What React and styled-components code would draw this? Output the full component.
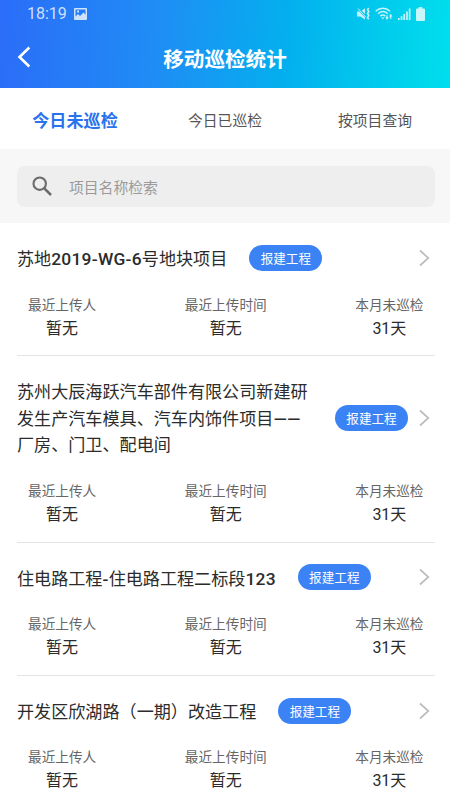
import React from 'react'
import styled, { createGlobalStyle } from 'styled-components';

const GlobalStyle = createGlobalStyle`
*{
    box-sizing:border-box;
}
body{
    margin:0;
    background:#fff;
    font-family:Roboto, 'Noto Sans CJK SC', sans-serif;
    color:#2b2b2b;
}
`;

const Page = styled.div`
    width:450px;
    height:800px;
    overflow:hidden;
    background:#fff;
`;

const Header = styled.header`
    height:88px;
    color:#fff;
    background:linear-gradient(93deg, #2b6df8 0%, #1f8df5 35%, #03b0ee 64%, #00dfec 100%);
`;

const StatusBar = styled.div`
    display:flex;
    align-items:center;
    justify-content:space-between;
    height:27px;
    padding:0 25px 0 27px;
    color:rgba(255,255,255,0.78);
`;

const StatusGroup = styled.div`
    display:flex;
    align-items:center;
    gap:${props => props.$gap};
`;

const Time = styled.span`
    font-size:16px;
    line-height:27px;
`;

const NavBar = styled.div`
    display:grid;
    grid-template-columns:60px 1fr 60px;
    align-items:center;
    height:61px;
`;

const BackButton = styled.button`
    display:flex;
    padding:0 0 1px 17px;
    border:none;
    background:none;
    color:#fff;
`;

const Title = styled.h1`
    margin:0;
    padding-top:4px;
    font-size:20.6px;
    font-weight:700;
    line-height:30px;
    text-align:center;
`;

const Tabs = styled.nav`
    display:flex;
    height:61px;
`;

const Tab = styled.button`
    flex:1;
    padding:2px 0 0;
    border:none;
    background:none;
    font-family:inherit;
    font-size:${props => (props.$active ? '17.1px' : '14.8px')};
    font-weight:${props => (props.$active ? 700 : 400)};
    color:${props => (props.$active ? '#2a73ee' : '#555')};
`;

const SearchArea = styled.div`
    height:74px;
    padding:16.5px 15px 0 17px;
    background:#f7f7f7;
`;

const SearchBox = styled.div`
    display:flex;
    align-items:center;
    gap:17px;
    height:41px;
    padding-left:15px;
    border-radius:8px;
    background:#eee;
    color:#9a9a9a;
    font-size:14.8px;
`;

const List = styled.div`
    padding:0 15px 0 17px;
`;

const Item = styled.section`
    padding:23px 0 15.8px;
    border-bottom:1px solid #e4e4e4;
`;

const ItemHead = styled.div`
    display:flex;
    align-items:center;
`;

const Name = styled.h2`
    margin:0;
    font-size:17.1px;
    font-weight:400;
    line-height:26.5px;
`;

const Latin = styled.span`
    font-size:17.4px;
    font-weight:500;
    line-height:1;
    letter-spacing:0.25px;
`;

const Badge = styled.span`
    flex:none;
    width:73px;
    height:26px;
    margin:-3px 11px 0 22px;
    border-radius:13px;
    background:#3b82f5;
    color:#fff;
    font-size:12.6px;
    line-height:27px;
    text-align:center;
`;

const Arrow = styled.svg`
    flex:none;
    margin:-3px 5px 0 auto;
    color:#bdbdbd;
`;

const Stats = styled.div`
    display:flex;
    justify-content:space-between;
    margin-top:22px;
    padding:0 11.5px 0 11px;
`;

const Stat = styled.div`
    text-align:center;
`;

const Label = styled.div`
    font-size:13.65px;
    line-height:21px;
    color:#666;
`;

const Value = styled.div`
    padding-top:2px;
    font-size:16px;
    line-height:22px;
`;

const items = [
    { name: '苏地2019-WG-6号地块项目' },
    { name: '苏州大辰海跃汽车部件有限公司新建研发生产汽车模具、汽车内饰件项目——厂房、门卫、配电间' },
    { name: '住电路工程-住电路工程二标段123' },
    { name: '开发区欣湖路（一期）改造工程' },
];

function StatusIcons() {
    return (
        <StatusGroup $gap='5px'>
            {/** Muted */}
            <svg width='13' height='14' viewBox='0 0 13 14' fill='currentColor'>
                <path d='M4.8 3.7L8 1.2v5.9zM0 4.6h2.3L8 10.5v2L3.4 9.4H0z' />
                <path d='M1 1.6l7.6 8.4' fill='none' stroke='currentColor' strokeWidth='1' />
                <path d='M11.7 1l-1.2 1.7 1.3 1.8-1.3 2 1.3 2-1.3 2 1.2 1.9' fill='none' stroke='currentColor' strokeWidth='1.6' />
            </svg>
            {/** Wifi */}
            <svg width='18' height='14' viewBox='0 0 18 14' fill='none' stroke='currentColor' strokeWidth='1.5'>
                <path d='M.7 4.2C4.8.3 11 .3 15 4.2M3 6.7c3-2.6 6.8-2.6 9.8 0M5.3 9.1c1.6-1.3 3.6-1.3 5 0' />
                <path d='M6.3 10.6h3L7.8 12.5z' fill='currentColor' stroke='none' />
                <path d='M10.2 10.3h3.6L12 13zM13.9 9.4h3.6l-1.8-2.700z' fill='currentColor' stroke='none' />
                <path d='M12 8.3v3M15.700 9v3' strokeWidth='1.2' />
            </svg>
            {/** Signal */}
            <svg width='13' height='14' viewBox='0 0 13 14' fill='currentColor'>
                <path d='M0 11h1.7v2H0zM2.7 9.2h1.7V13H2.7zM5.4 7h1.7v6H5.4zM8.1 4.6h1.7V13H8.1zM10.8 1.5h1.7V13h-1.7z' />
            </svg>
            {/** Battery */}
            <svg width='9' height='14' viewBox='0 0 9 14' fill='currentColor'>
                <path d='M2.7 0h3.6v1.5H8q1 0 1 1V13q0 1-1 1H1q-1 0-1-1V2.5q0-1 1-1h1.7z' />
            </svg>
        </StatusGroup>
    )
}

function ProjectItem({ name }) {
    // letters and digits are heavier than the Chinese text around them
    const parts = name.split(/([A-Za-z0-9-]+|—+)/);

    return (
        <Item>
            <ItemHead>
                <Name>
                    {parts.map((part, i) => (i % 2 ? <Latin key={i}>{part}</Latin> : part))}
                </Name>
                <Badge>报建工程</Badge>
                <Arrow width='11' height='18' viewBox='0 0 11 18' fill='none' stroke='currentColor' strokeWidth='1.7'>
                    <path d='M1 1.5L9.3 9 1 16.5' />
                </Arrow>
            </ItemHead>
            <Stats>
                <Stat>
                    <Label>最近上传人</Label>
                    <Value>暂无</Value>
                </Stat>
                <Stat>
                    <Label>最近上传时间</Label>
                    <Value>暂无</Value>
                </Stat>
                <Stat>
                    <Label>本月未巡检</Label>
                    <Value>31天</Value>
                </Stat>
            </Stats>
        </Item>
    )
}

function App() {
    return (
        <Page>
            <GlobalStyle />
            <Header>
                <StatusBar>
                    <StatusGroup $gap='7px'>
                        <Time>18:19</Time>
                        <svg width='13' height='12' viewBox='0 0 13 12' fill='currentColor' fillRule='evenodd'>
                            <path d='M1 0h11q1 0 1 1v10q0 1-1 1H1q-1 0-1-1V1q0-1 1-1zM1.5 1.5v7L4 6l2 2 3.5-3.5 2 2.3V1.5zM3 2.5h2v2H3z' />
                        </svg>
                    </StatusGroup>
                    <StatusIcons />
                </StatusBar>
                <NavBar>
                    <BackButton>
                        <svg width='14' height='22' viewBox='0 0 14 22' fill='none' stroke='currentColor' strokeWidth='2.6'>
                            <path d='M12.3 1.5L2.5 11l9.8 9.5' />
                        </svg>
                    </BackButton>
                    <Title>移动巡检统计</Title>
                </NavBar>
            </Header>
            <Tabs>
                <Tab $active>今日未巡检</Tab>
                <Tab>今日已巡检</Tab>
                <Tab>按项目查询</Tab>
            </Tabs>
            <SearchArea>
                <SearchBox>
                    <svg width='20' height='20' viewBox='0 0 20 20' fill='none' stroke='#6b6b6b' strokeWidth='2.1'>
                        <circle cx='7.7' cy='7.7' r='6.2' />
                        <path d='M12.3 12.3l6.7 6.7' strokeWidth='2.5' />
                    </svg>
                    <span>项目名称检索</span>
                </SearchBox>
            </SearchArea>
            <List>
                {items.map(item => (
                    <ProjectItem key={item.name} name={item.name} />
                ))}
            </List>
        </Page>
    )
}

export default App
